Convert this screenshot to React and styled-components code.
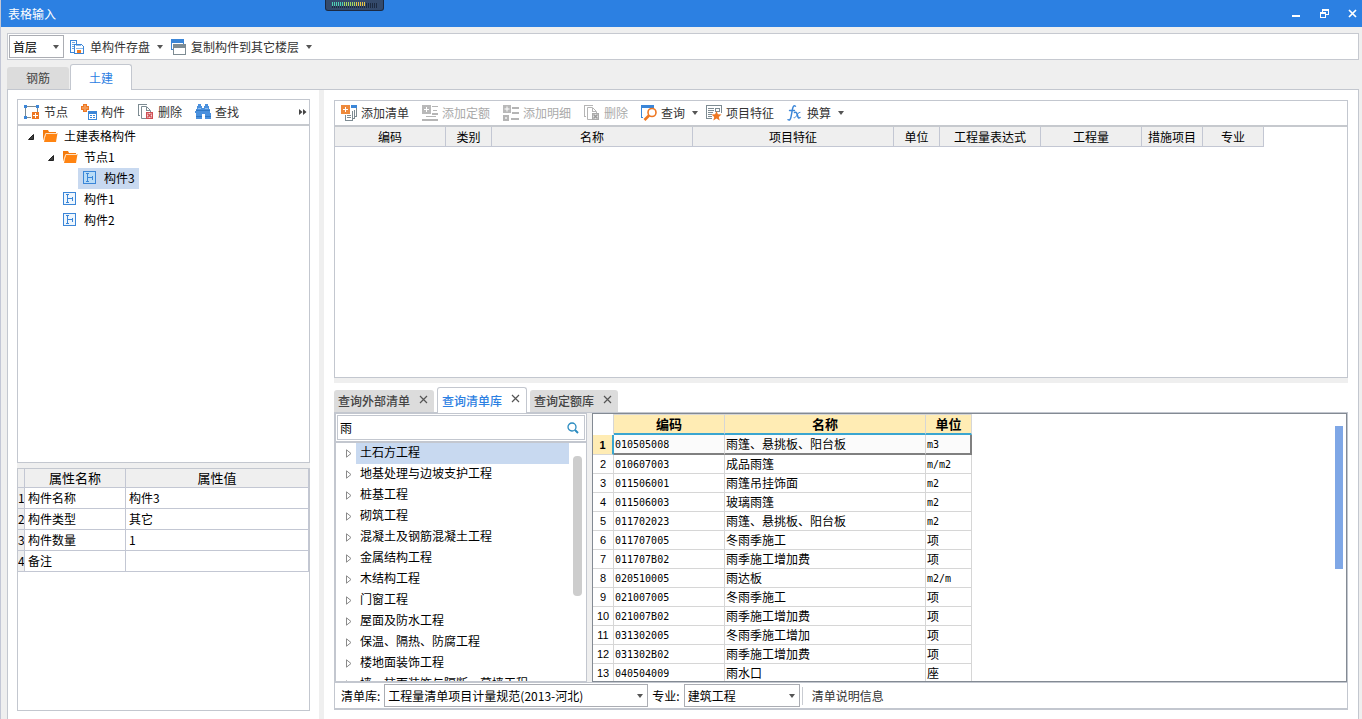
import styled, { createGlobalStyle } from 'styled-components';

const GlobalStyle = createGlobalStyle`
  * {
    box-sizing: border-box;
  }
  body {
    margin: 0;
    background: #efefef;
    color: #000;
    font: 12px/16px "Noto Sans CJK SC", "Liberation Sans", sans-serif;
  }
  button, input, select {
    font: inherit;
    color: inherit;
    margin: 0;
    padding: 0;
    border: 0;
    background: none;
  }
  ul {
    list-style: none;
    margin: 0;
    padding: 0;
  }
  svg {
    display: block;
    flex: none;
  }
`;

/* ---------- icons ---------- */

const Svg = ({ size = 16, children }) => (
  <svg width={size} height={size} viewBox={`0 0 ${size} ${size}`} fill="none" shapeRendering="crispEdges" aria-hidden="true">
    {children}
  </svg>
);

const SaveIcon = () => (
  <Svg>
    <path d="M4 13.500H.500V1.500h6V5" stroke="#3b86d8" />
    <path d="M2 3.500h3M2 5.500h2M2 7.500h2M2 9.500h2" stroke="#6ba5e2" />
    <path d="M4.500 5.500h7l2 2v7h-9z" stroke="#3b86d8" fill="#fff" />
    <path d="M6 6.500h5M6 9.500h7" stroke="#8db9e8" />
    <path d="M7 11h4v3H7z" fill="#f47b20" />
  </Svg>
);

const CopyIcon = () => (
  <Svg>
    <path d="M.500 .500h12v10H.500z" stroke="#3b86d8" fill="#fff" />
    <path d="M0 0h13v4H0z" fill="#3b86d8" />
    <path d="M2 5h13v11H2z" fill="#fff" />
    <path d="M2.500 5.500h12v10h-12z" stroke="#7d8b92" fill="#fff" />
    <path d="M2 5h13v4H2z" fill="#7d8b92" />
  </Svg>
);

const NodeIcon = () => (
  <Svg>
    <path d="M7 13.500H1.500V2.500h12V8" stroke="#7d8b92" />
    <path d="M0 1h3v3H0zM12 1h3v3h-3zM0 12h3v3H0z" fill="#3b86d8" />
    <path d="M8 8h7v7H8z" fill="#ee7722" />
    <path d="M11.500 9v5M9 11.500h5" stroke="#fff" />
  </Svg>
);

const MemberIcon = () => (
  <Svg>
    <path d="M2.500 .500h3v2h2v3h-2v2h-3v-2h-2v-3h2z" fill="#f39a56" stroke="#ee7722" />
    <path d="M7.500 7.500h8v8h-8z" fill="#fff" stroke="#3b86d8" />
    <path d="M7 7h9v3H7z" fill="#3b86d8" />
    <path d="M9 11.500h2M12 11.500h2M9 13.500h2M12 13.500h2" stroke="#3b86d8" />
  </Svg>
);

const DeleteIcon = ({ off }) => (
  <Svg>
    <path d="M2 11.500H.500V.500h8" stroke={off ? '#b5b5b5' : '#7d8b92'} />
    <path d="M8 14.500H3.500V2.500h5l4 4V8" stroke={off ? '#b5b5b5' : '#7d8b92'} shapeRendering="auto" />
    <path d="M8.500 3v3.500H12" stroke={off ? '#b5b5b5' : '#7d8b92'} />
    <path d="M8.500 8.500h6v6h-6z" fill={off ? '#e0e0e0' : '#f6d5d5'} stroke={off ? '#aaa' : '#cf4f55'} />
    <path d="M9.500 9.500l4 4M13.500 9.500l-4 4" stroke={off ? '#999' : '#cf4f55'} strokeWidth="1.400" shapeRendering="auto" />
  </Svg>
);

const BinocularsIcon = () => (
  <Svg>
    <path d="M3 0h3v2h1v2h2V2h1V0h3v2h1v3h1v4h1v6h-6v-5H7v5H1V9H0l1-4h1V2h1z" fill="#4a90dd" />
    <path d="M1 6.500h14M1 12.500h6M10 12.500h6" stroke="#2f77c4" />
    <path d="M3 4h3M10 4h3" stroke="#8dbcf0" />
  </Svg>
);

const AddListIcon = () => (
  <Svg>
    <path d="M10 0h6v3h-6z" fill="#3b86d8" />
    <path d="M15.500 3v8h-2M13.500 5v8.500h-2M11.500 6v9.500h-7V10" stroke="#7d8b92" />
    <path d="M6 10.500h4M6 12.500h4" stroke="#7d8b92" />
    <path d="M0 0h9v9H0z" fill="#ee8a3c" />
    <path d="M4.500 2v5M2 4.500h5" stroke="#fff" />
  </Svg>
);

const AddQuotaIcon = () => (
  <Svg>
    <path d="M0 0h9v9H0z" fill="#b9b9b9" />
    <path d="M4.500 2v5M2 4.500h5" stroke="#fff" />
    <path d="M10 1h6v1h-6zM11 5h4v1h-4zM10 8h6v2h-6zM4 11h10v1H4zM0 14h16v2H0z" fill="#b5b5b5" />
  </Svg>
);

const AddDetailIcon = () => (
  <Svg>
    <path d="M0 0h8v8H0z" fill="#b9b9b9" />
    <path d="M4 1.500v5M1.500 4h5" stroke="#fff" shapeRendering="auto" />
    <path d="M9 2h7v2H9zM9 7h7v2H9zM8 13h8v2H8z" fill="#b5b5b5" />
    <path d="M1 11h4v4H1z" fill="#e4e4e4" stroke="#b5b5b5" strokeWidth="2" />
  </Svg>
);

const QueryIcon = () => (
  <Svg>
    <path d="M.500 13V1h12v3M0 12.500h2" stroke="#3b86d8" />
    <path d="M0 0h13v3H0z" fill="#3b86d8" />
    <g shapeRendering="auto" stroke="#ee7722">
      <circle cx="11" cy="7.500" r="4" strokeWidth="1.600" fill="#fff" />
      <path d="M8 10.500L3.500 15" strokeWidth="2.600" />
    </g>
  </Svg>
);

const FeatureIcon = () => (
  <Svg>
    <path d="M6 13.500H.500V.500h15V8" stroke="#7d8b92" />
    <path d="M2 3.500h6M2 5.500h6M2 7.500h5M2 9.500h4M2 11.500h4M9.500 3.500h4v3h-4z" stroke="#7d8b92" />
    <path d="M10.500 6l1.400 3.200 3.600.300-2.700 2.400.900 3.600-3.200-1.900-3.200 1.900.900-3.600-2.700-2.400 3.600-.300z" fill="#ee7722" shapeRendering="auto" />
  </Svg>
);

const FxIcon = () => (
  <Svg>
    <g shapeRendering="auto" stroke="#3b86d8" strokeLinecap="round">
      <path d="M8.500 1.200C6.800 0 6 1.500 5.500 4L4 12c-.500 2.500-1.500 3.600-3 2.700M2.500 5.500h5" strokeWidth="1.400" />
      <path d="M7.500 7.500c2-1 2.500 1 3 3s1 3.200 2.500 2" strokeWidth="1.600" />
      <path d="M13 7.300c-1.500-.200-2.800 2.200-3.300 3.200S8 13.200 7 12.800" strokeWidth="1" />
    </g>
  </Svg>
);

const FolderIcon = () => (
  <svg width="16" height="16" viewBox="0 0 16 16" aria-hidden="true">
    <path d="M0 2h5l1 2h7v2H2.500L1 12H0z" fill="#f47a0c" />
    <path d="M3 5h11.500L13 14H1z" fill="#ff8412" />
    <path d="M.500 12L2.700 5.500H14" stroke="#ffe0c0" fill="none" />
  </svg>
);

const PartIcon = ({ fill }) => (
  <Svg>
    <path d="M.500 1.500h12v12H.500z" stroke="#3b86d8" fill={fill} />
    <path d="M3 3.500h3M3 11.500h3M4.500 4v7M5 7.500h5M9.500 6v4" stroke="#3b86d8" />
  </Svg>
);

const Caret = () => (
  <svg width="6" height="4" viewBox="0 0 6 4" aria-hidden="true">
    <path d="M0 0h6L3 4z" fill="#555" />
  </svg>
);

const OpenArrow = () => (
  <svg width="6" height="6" viewBox="0 0 6 6" aria-hidden="true">
    <path d="M5.500 .500v5h-5z" fill="#404040" stroke="#222" />
  </svg>
);

const ClosedArrow = () => (
  <svg width="6" height="9" viewBox="0 0 6 9" aria-hidden="true">
    <path d="M.500 .800v7.400L5 4.500z" fill="#fff" stroke="#8a8a8a" />
  </svg>
);

const SearchIcon = () => (
  <svg width="12" height="12" viewBox="0 0 12 12" fill="none" stroke="#2a8bc0" aria-hidden="true">
    <circle cx="5" cy="5" r="4" strokeWidth="1.300" />
    <path d="M8 8l3 3" strokeWidth="2" />
  </svg>
);

const CrossIcon = () => (
  <svg width="9" height="9" viewBox="0 0 9 9" stroke="#555" aria-hidden="true">
    <path d="M1 1l7 7M8 1L1 8" strokeWidth="1.200" />
  </svg>
);

const MoreIcon = () => (
  <svg width="8" height="6" viewBox="0 0 8 6" fill="#444" aria-hidden="true">
    <path d="M0 0l3.500 3L0 6zM4 0l3.500 3L4 6z" />
  </svg>
);

/* ---------- frame ---------- */

const Window = styled.div`
  display: flex;
  flex-direction: column;
  height: 100vh;
  overflow: hidden;
  border-left: 1px solid #c3c7d6;
`;

const TitleBar = styled.header`
  position: relative;
  display: flex;
  align-items: center;
  justify-content: space-between;
  flex: none;
  height: 27px;
  padding-left: 7px;
  background: #2c80e2;
  color: #fff;
`;

const Title = styled.h1`
  margin: 0;
  font-size: 12px;
  font-weight: 400;
`;

const Meter = styled.div`
  position: absolute;
  top: 0;
  left: 324px;
`;

const WindowButtons = styled.div`
  display: flex;
  gap: 8px;
`;

const WindowButton = styled.button`
  display: flex;
  align-items: center;
  justify-content: center;
  width: 20px;
  height: 27px;
`;

const TopBar = styled.div`
  display: flex;
  align-items: center;
  gap: 2px;
  flex: none;
  height: 27px;
  margin: 6px 3px 0 6px;
  padding: 0 1px;
  border: 1px solid #c6c9d0;
  background: #fff;
`;

const ToolButton = styled.button`
  display: flex;
  align-items: center;
  gap: 4px;
  height: 22px;
  padding: 0 ${(p) => (p.$menu ? 2 : 7)}px 0 4px;
  border-radius: 3px;
  color: #333;
  white-space: nowrap;

  &:disabled {
    color: #aaa;
  }
  & > svg:nth-of-type(2) {
    margin-left: 3px;
  }
`;

const SelectBox = styled.span`
  display: grid;
  align-items: center;
  width: ${(p) => p.$width}px;
  height: 23px;
  border: 1px solid #abadb3;
  background: #fff;

  & > * {
    grid-area: 1 / 1;
  }
  & > svg {
    justify-self: end;
    margin-right: 4px;
    pointer-events: none;
  }
`;

const Select = styled.select`
  appearance: none;
  width: 100%;
  height: 21px;
  padding-left: 3px;
`;

const MainTabs = styled.nav`
  display: flex;
  align-items: flex-end;
  gap: 1px;
  flex: none;
  height: 30px;
  margin: 0 3px -1px 6px;
`;

const MainTab = styled.button`
  position: relative;
  width: 62px;
  height: ${(p) => (p.$active ? 26 : 22)}px;
  margin-bottom: ${(p) => (p.$active ? 0 : 1)}px;
  border: ${(p) => (p.$active ? '1px solid #c3c7cf' : '0')};
  border-bottom: 0;
  border-radius: 3px 3px 0 0;
  background: ${(p) => (p.$active ? '#fff' : '#dcdcdc')};
  color: ${(p) => (p.$active ? '#2c80e2' : '#444')};
`;

const Workspace = styled.main`
  display: flex;
  flex: 1;
  min-height: 0;
  margin: 0 3px 0 6px;
  border: 1px solid #c3c7cf;
  border-bottom: 0;
  background: #fff;
`;

const LeftColumn = styled.section`
  display: flex;
  flex-direction: column;
  flex: none;
  width: 311px;
  padding: 9px 9px 8px;
`;

const RightColumn = styled.section`
  display: flex;
  flex-direction: column;
  flex: 1;
  min-width: 0;
  padding: 10px 10px 9px;
`;

const Divider = styled.div`
  flex: none;
  width: ${(p) => (p.$vertical ? '5px' : 'auto')};
  height: ${(p) => (p.$vertical ? 'auto' : '5px')};
  background: #efefef;
`;

const Panel = styled.div`
  display: flex;
  flex-direction: column;
  flex: ${(p) => p.$grow || 1};
  min-height: 0;
  border: 1px solid #c3c7cf;
`;

const Toolbar = styled.div`
  display: flex;
  align-items: center;
  gap: 2px;
  flex: none;
  height: 26px;
  padding: 0 2px;
  border-bottom: 2px solid #c6c9ce;
`;

const MoreButton = styled.button`
  height: 22px;
  margin-left: auto;
`;

/* ---------- component tree ---------- */

const TreeRow = styled.li`
  display: flex;
  align-items: center;
  height: 21px;
  padding-left: ${(p) => p.$level * 20}px;
`;

const Toggle = styled.span`
  display: flex;
  justify-content: center;
  width: 20px;
  padding-left: 6px;
`;

const TreeLabel = styled.button`
  display: flex;
  align-items: center;
  gap: 5px;
  height: 21px;
  padding: 0 4px 2px 5px;
  background: ${(p) => (p.$selected ? '#c8d9f0' : 'none')};
`;

/* ---------- tables ---------- */

const Grid = styled.table`
  flex: none;
  table-layout: fixed;
  border-collapse: separate;
  border-spacing: 0;
  width: ${(p) => p.$width}px;

  th, td {
    overflow: hidden;
    padding: 0;
    border: 0 solid #c3c7d3;
    border-width: 0 1px 1px 0;
    line-height: 16px;
    white-space: nowrap;
  }
  th {
    background: #efefef;
    font-weight: 400;
  }
`;

const BillGrid = styled(Grid)`
  th {
    height: 20px;
  }
`;

const PropertyGrid = styled(Grid)`
  th {
    height: 19px;
    font-size: 13px;
  }
  td {
    height: 21px;
    padding-left: 3px;
  }
  tbody th {
    font-size: 12px;
  }
`;

const SheetGrid = styled(Grid)`
  th, td {
    height: 19px;
    border-color: #d6d6d6;
  }
  td {
    padding-left: 1px;
  }
  thead th {
    height: 21px;
    border-top-width: 1px;
    border-bottom: 2px solid #3aa5d0;
    background: #ffecb4;
    font-size: 13px;
    font-weight: 700;
  }
  thead td {
    border-bottom-color: #fff;
  }
  tbody th {
    background: #fff;
    font: 11px/16px "Liberation Sans", sans-serif;
  }
  tbody tr:first-child {
    th {
      border-right: 2px solid #3aa5d0;
      background: #ffecb4;
      font-weight: 700;
    }
    td {
      border-bottom: 2px solid #808080;
      background: #fbfbfb;
    }
    td:last-child {
      border-right: 2px solid #808080;
    }
  }
`;

const Code = styled.span`
  font: 10px/16px "DejaVu Sans Mono", monospace;
`;

/* ---------- query panel ---------- */

const QueryArea = styled.div`
  display: flex;
  flex-direction: column;
  flex: none;
  height: 327px;
  padding-top: 4px;
`;

const QueryTabs = styled.div`
  display: flex;
  align-items: flex-end;
  gap: 3px;
  height: 26px;
  margin-bottom: -1px;
`;

const QueryTab = styled.div`
  position: relative;
  display: flex;
  align-items: center;
  gap: 9px;
  height: ${(p) => (p.$active ? 26 : 22)}px;
  margin-bottom: ${(p) => (p.$active ? 0 : 1)}px;
  padding: 0 6px 0 4px;
  border: ${(p) => (p.$active ? '1px solid #c3c7cf' : '0')};
  border-bottom: 0;
  border-radius: 3px 3px 0 0;
  background: ${(p) => (p.$active ? '#fff' : '#dcdcdc')};
  color: ${(p) => (p.$active ? '#2c80e2' : '#444')};
  font-weight: 500;
`;

const CloseTab = styled.button`
  padding-bottom: 4px;
`;

const QueryPanel = styled.div`
  display: flex;
  flex-direction: column;
  flex: 1;
  min-height: 0;
  border: 1px solid #c3c7cf;
  border-bottom-width: 2px;
`;

const QueryBody = styled.div`
  display: flex;
  flex: 1;
  min-height: 0;
`;

const Catalog = styled.div`
  display: flex;
  flex-direction: column;
  flex: none;
  width: 252px;
`;

const SearchFrame = styled.div`
  flex: none;
  padding: 1px;
  border: 1px solid #c3c7cf;
`;

const SearchBox = styled.label`
  display: flex;
  align-items: center;
  height: 25px;
  padding: 0 5px 0 2px;
  border: 1px solid #c3c7cf;
`;

const SearchInput = styled.input`
  flex: 1;
  min-width: 0;
  outline: 0;
`;

const CatalogBody = styled.div`
  display: flex;
  flex: 1;
  min-height: 0;
  border: 1px solid #c3c7cf;
`;

const CatalogList = styled.ul`
  flex: 1;
  overflow: hidden;
`;

const CatalogRow = styled.li`
  display: flex;
  align-items: center;
  height: 21px;
`;

const CatalogLabel = styled.button`
  flex: 1;
  height: 21px;
  padding: 0 0 4px 4px;
  background: ${(p) => (p.$selected ? '#c8d9f0' : 'none')};
  text-align: left;
  white-space: nowrap;
`;

const CatalogThumb = styled.div`
  width: 9px;
  height: 140px;
  margin: 13px 4px 0;
  border-radius: 4px;
  background: #cdcdcd;
`;

const Sheet = styled.div`
  display: flex;
  justify-content: space-between;
  align-items: flex-start;
  flex: 1;
  overflow: hidden;
  border: 1px solid #838a93;
`;

const SheetThumb = styled.div`
  width: 8px;
  height: 143px;
  margin: 12px 3px 0 0;
  background: #7fa7e6;
`;

const Footer = styled.footer`
  display: flex;
  align-items: center;
  flex: none;
  height: 26px;
  padding-left: 6px;
  border-top: 1px solid #c3c7cf;
`;

const Field = styled.label`
  display: flex;
  align-items: center;
  gap: 4px;
  margin-right: ${(p) => p.$after}px;
`;

const Bar = styled.span`
  width: 1px;
  height: 18px;
  margin-right: 2px;
  background: #c9ccd2;
`;

const InfoButton = styled.button`
  height: 20px;
  padding: 0 7px;
  color: #333;
`;

/* ---------- data ---------- */

const tree = [
  { name: '土建表格构件', level: 0, folder: true },
  { name: '节点1', level: 1, folder: true },
  { name: '构件3', level: 2, selected: true },
  { name: '构件1', level: 1 },
  { name: '构件2', level: 1 },
];

const properties = [
  ['构件名称', '构件3'],
  ['构件类型', '其它'],
  ['构件数量', '1'],
  ['备注', ''],
];

const billColumns = [
  ['编码', 111],
  ['类别', 46],
  ['名称', 201],
  ['项目特征', 201],
  ['单位', 46],
  ['工程量表达式', 101],
  ['工程量', 101],
  ['措施项目', 61],
  ['专业', 61],
];

const catalog = [
  '土石方工程',
  '地基处理与边坡支护工程',
  '桩基工程',
  '砌筑工程',
  '混凝土及钢筋混凝土工程',
  '金属结构工程',
  '木结构工程',
  '门窗工程',
  '屋面及防水工程',
  '保温、隔热、防腐工程',
  '楼地面装饰工程',
  '墙、柱面装饰与隔断、幕墙工程',
];

const sheetRows = [
  ['010505008', '雨篷、悬挑板、阳台板', 'm3'],
  ['010607003', '成品雨篷', 'm/m2'],
  ['011506001', '雨篷吊挂饰面', 'm2'],
  ['011506003', '玻璃雨篷', 'm2'],
  ['011702023', '雨篷、悬挑板、阳台板', 'm2'],
  ['011707005', '冬雨季施工', '项'],
  ['011707B02', '雨季施工增加费', '项'],
  ['020510005', '雨达板', 'm2/m'],
  ['021007005', '冬雨季施工', '项'],
  ['021007B02', '雨季施工增加费', '项'],
  ['031302005', '冬雨季施工增加', '项'],
  ['031302B02', '雨季施工增加费', '项'],
  ['040504009', '雨水口', '座'],
];

const meterBars = Array.from({ length: 23 }, (_, i) => i);

const meterColor = (i) => {
  if (i > 16) return '#1c2a40';
  if (i > 11) return '#e8c545';
  return i > 5 ? '#a5d860' : '#4fd0b4';
};

/* ---------- parts ---------- */

const Tool = ({ icon, menu, disabled, children }) => (
  <ToolButton type="button" $menu={menu} disabled={disabled}>
    {icon}
    {children}
    {menu && <Caret />}
  </ToolButton>
);

const Picker = ({ width, value, label }) => (
  <SelectBox $width={width}>
    <Select defaultValue={value} aria-label={label}>
      <option>{value}</option>
    </Select>
    <Caret />
  </SelectBox>
);

const TitleRow = () => (
  <TitleBar>
    <Title>表格输入</Title>
    <Meter>
      <svg width="59" height="11" viewBox="0 0 59 11" aria-hidden="true">
        <path d="M0 0h59v8q0 3-3 3H3q-3 0-3-3z" fill="#1b2840" />
        <path d="M1 0h57v8q0 2-2 2H3q-2 0-2-2z" fill="#344a6b" />
        {meterBars.map((i) => (
          <g key={i}>
            <rect x={7 + i * 2} y="3" width="1" height="5" fill="#1c2a40" />
            {i < 17 && <rect x={7 + i * 2} y="2" width="1" height="4" fill={meterColor(i)} />}
          </g>
        ))}
      </svg>
    </Meter>
    <WindowButtons>
      <WindowButton type="button" aria-label="最小化">
        <svg width="9" height="9" viewBox="0 0 9 9"><path d="M0 6h8v2H0z" fill="#fff" /></svg>
      </WindowButton>
      <WindowButton type="button" aria-label="还原">
        <svg width="9" height="9" viewBox="0 0 9 9" fill="none" stroke="#fff" shapeRendering="crispEdges">
          <path d="M2.500 3V.500h6v5H6M2 1.500h7M.500 3.500h5v5h-5zM0 4.500h6" />
        </svg>
      </WindowButton>
      <WindowButton type="button" aria-label="关闭">
        <svg width="9" height="9" viewBox="0 0 9 9" stroke="#fff">
          <path d="M1 1l7 7M8 1L1 8" strokeWidth="1.700" />
        </svg>
      </WindowButton>
    </WindowButtons>
  </TitleBar>
);

const ComponentTree = () => (
  <Panel $grow={3}>
    <Toolbar>
      <Tool icon={<NodeIcon />}>节点</Tool>
      <Tool icon={<MemberIcon />}>构件</Tool>
      <Tool icon={<DeleteIcon />}>删除</Tool>
      <Tool icon={<BinocularsIcon />}>查找</Tool>
      <MoreButton type="button" aria-label="更多"><MoreIcon /></MoreButton>
    </Toolbar>
    <ul>
      {tree.map((item) => (
        <TreeRow key={item.name} $level={item.level}>
          <Toggle>{item.folder && <OpenArrow />}</Toggle>
          <TreeLabel type="button" $selected={item.selected}>
            {item.folder ? <FolderIcon /> : <PartIcon fill={item.selected ? '#b9dcf7' : '#eef6fd'} />}
            {item.name}
          </TreeLabel>
        </TreeRow>
      ))}
    </ul>
  </Panel>
);

const Properties = () => (
  <Panel $grow={2}>
    <PropertyGrid $width={291}>
      <colgroup>
        <col width="7" />
        <col width="101" />
        <col width="183" />
      </colgroup>
      <thead>
        <tr>
          <th />
          <th>属性名称</th>
          <th>属性值</th>
        </tr>
      </thead>
      <tbody>
        {properties.map(([name, value], i) => (
          <tr key={name}>
            <th>{i + 1}</th>
            <td>{name}</td>
            <td>{value}</td>
          </tr>
        ))}
      </tbody>
    </PropertyGrid>
  </Panel>
);

const BillPanel = () => (
  <Panel>
    <Toolbar>
      <Tool icon={<AddListIcon />}>添加清单</Tool>
      <Tool icon={<AddQuotaIcon />} disabled>添加定额</Tool>
      <Tool icon={<AddDetailIcon />} disabled>添加明细</Tool>
      <Tool icon={<DeleteIcon off />} disabled>删除</Tool>
      <Tool icon={<QueryIcon />} menu>查询</Tool>
      <Tool icon={<FeatureIcon />}>项目特征</Tool>
      <Tool icon={<FxIcon />} menu>换算</Tool>
    </Toolbar>
    <BillGrid $width={929}>
      <colgroup>
        {billColumns.map(([name, width]) => <col key={name} width={width} />)}
      </colgroup>
      <thead>
        <tr>{billColumns.map(([name]) => <th key={name}>{name}</th>)}</tr>
      </thead>
    </BillGrid>
  </Panel>
);

const QueryTabItem = ({ active, children }) => (
  <QueryTab $active={active}>
    <button type="button">{children}</button>
    <CloseTab type="button" aria-label={`关闭${children}`}><CrossIcon /></CloseTab>
  </QueryTab>
);

const ResultSheet = () => (
  <Sheet>
    <SheetGrid $width={379}>
      <colgroup>
        <col width="21" />
        <col width="111" />
        <col width="201" />
        <col width="46" />
      </colgroup>
      <thead>
        <tr>
          <td />
          <th>编码</th>
          <th>名称</th>
          <th>单位</th>
        </tr>
      </thead>
      <tbody>
        {sheetRows.map(([code, name, unit], i) => (
          <tr key={code}>
            <th>{i + 1}</th>
            <td><Code>{code}</Code></td>
            <td>{name}</td>
            <td>{unit.startsWith('m') ? <Code>{unit}</Code> : unit}</td>
          </tr>
        ))}
      </tbody>
    </SheetGrid>
    <SheetThumb />
  </Sheet>
);

const Query = () => (
  <QueryArea>
    <QueryTabs>
      <QueryTabItem>查询外部清单</QueryTabItem>
      <QueryTabItem active>查询清单库</QueryTabItem>
      <QueryTabItem>查询定额库</QueryTabItem>
    </QueryTabs>
    <QueryPanel>
      <QueryBody>
        <Catalog>
          <SearchFrame>
            <SearchBox>
              <SearchInput type="text" defaultValue="雨" aria-label="查询" />
              <SearchIcon />
            </SearchBox>
          </SearchFrame>
          <CatalogBody>
            <CatalogList>
              {catalog.map((name, i) => (
                <CatalogRow key={name}>
                  <Toggle><ClosedArrow /></Toggle>
                  <CatalogLabel type="button" $selected={i === 0}>{name}</CatalogLabel>
                </CatalogRow>
              ))}
            </CatalogList>
            <CatalogThumb />
          </CatalogBody>
        </Catalog>
        <Divider $vertical />
        <ResultSheet />
      </QueryBody>
      <Footer>
        <Field $after={4}>
          清单库:
          <Picker width={264} value="工程量清单项目计量规范(2013-河北)" />
        </Field>
        <Field $after={2}>
          专业:
          <Picker width={116} value="建筑工程" />
        </Field>
        <Bar />
        <InfoButton type="button">清单说明信息</InfoButton>
      </Footer>
    </QueryPanel>
  </QueryArea>
);

const App = () => (
  <>
    <GlobalStyle />
    <Window>
      <TitleRow />
      <TopBar>
        <Picker width={55} value="首层" label="楼层" />
        <Tool icon={<SaveIcon />} menu>单构件存盘</Tool>
        <Tool icon={<CopyIcon />} menu>复制构件到其它楼层</Tool>
      </TopBar>
      <MainTabs>
        <MainTab type="button">钢筋</MainTab>
        <MainTab type="button" $active>土建</MainTab>
      </MainTabs>
      <Workspace>
        <LeftColumn>
          <ComponentTree />
          <Divider />
          <Properties />
        </LeftColumn>
        <Divider $vertical />
        <RightColumn>
          <BillPanel />
          <Divider />
          <Query />
        </RightColumn>
      </Workspace>
    </Window>
  </>
);

export default App;
